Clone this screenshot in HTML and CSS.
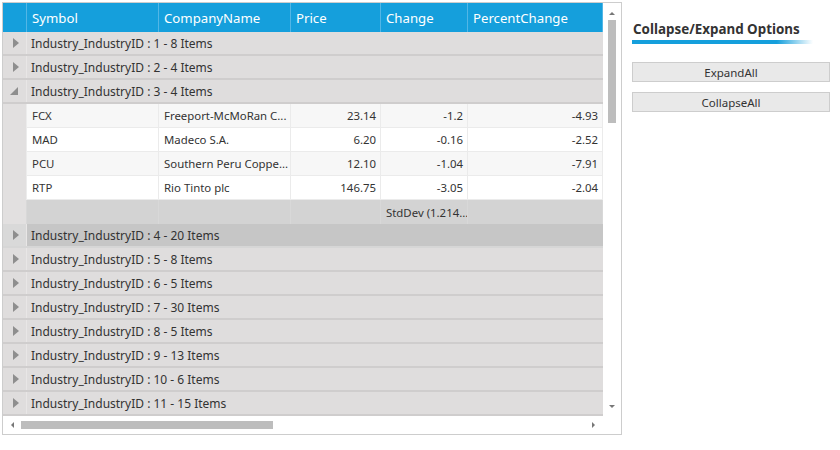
FILE: index.html
```html
<!DOCTYPE html>
<html>
<head>
<meta charset="utf-8">
<link rel="stylesheet" href="styles.css">
</head>
<body>
<div class="page">
  <div class="grid">
    <div class="viewport">
      <div class="header row">
        <div class="c ind hd"></div>
        <div class="c w1 hd">Symbol</div>
        <div class="c w2 hd">CompanyName</div>
        <div class="c w3 hd">Price</div>
        <div class="c w4 hd">Change</div>
        <div class="c w5 hd">PercentChange</div>
      </div>
      <div class="group"><div class="gind"><span class="tri-r"></span></div><div class="gtext">Industry_IndustryID : 1 - 8 Items</div></div>
      <div class="group"><div class="gind"><span class="tri-r"></span></div><div class="gtext">Industry_IndustryID : 2 - 4 Items</div></div>
      <div class="group"><div class="gind"><span class="tri-d"></span></div><div class="gtext">Industry_IndustryID : 3 - 4 Items</div></div>
      <div class="row data alt"><div class="c ind di"></div><div class="c w1">FCX</div><div class="c w2">Freeport-McMoRan C...</div><div class="c w3 r">23.14</div><div class="c w4 r">-1.2</div><div class="c w5 r">-4.93</div></div>
      <div class="row data"><div class="c ind di"></div><div class="c w1">MAD</div><div class="c w2">Madeco S.A.</div><div class="c w3 r">6.20</div><div class="c w4 r">-0.16</div><div class="c w5 r">-2.52</div></div>
      <div class="row data alt"><div class="c ind di"></div><div class="c w1">PCU</div><div class="c w2">Southern Peru Coppe...</div><div class="c w3 r">12.10</div><div class="c w4 r">-1.04</div><div class="c w5 r">-7.91</div></div>
      <div class="row data"><div class="c ind di"></div><div class="c w1">RTP</div><div class="c w2">Rio Tinto plc</div><div class="c w3 r">146.75</div><div class="c w4 r">-3.05</div><div class="c w5 r">-2.04</div></div>
      <div class="row summary"><div class="c ind si"></div><div class="c w1"></div><div class="c w2"></div><div class="c w3"></div><div class="c w4">StdDev (1.214...</div><div class="c w5"></div></div>
      <div class="group hot"><div class="gind"><span class="tri-r"></span></div><div class="gtext">Industry_IndustryID : 4 - 20 Items</div></div>
      <div class="group"><div class="gind"><span class="tri-r"></span></div><div class="gtext">Industry_IndustryID : 5 - 8 Items</div></div>
      <div class="group"><div class="gind"><span class="tri-r"></span></div><div class="gtext">Industry_IndustryID : 6 - 5 Items</div></div>
      <div class="group"><div class="gind"><span class="tri-r"></span></div><div class="gtext">Industry_IndustryID : 7 - 30 Items</div></div>
      <div class="group"><div class="gind"><span class="tri-r"></span></div><div class="gtext">Industry_IndustryID : 8 - 5 Items</div></div>
      <div class="group"><div class="gind"><span class="tri-r"></span></div><div class="gtext">Industry_IndustryID : 9 - 13 Items</div></div>
      <div class="group"><div class="gind"><span class="tri-r"></span></div><div class="gtext">Industry_IndustryID : 10 - 6 Items</div></div>
      <div class="group"><div class="gind"><span class="tri-r"></span></div><div class="gtext">Industry_IndustryID : 11 - 15 Items</div></div>
    </div>
    <div class="vscroll">
      <span class="arr-up"></span>
      <div class="vtrack"><div class="vthumb"></div></div>
      <span class="arr-down"></span>
    </div>
    <div class="hscroll">
      <span class="arr-left"></span>
      <div class="htrack"><div class="hthumb"></div></div>
      <span class="arr-right"></span>
    </div>
    <div class="corner"></div>
  </div>
  <div class="panel">
    <div class="title">Collapse/Expand Options</div>
    <div class="bar"></div>
    <button class="btn first">ExpandAll</button>
    <button class="btn">CollapseAll</button>
  </div>
</div>
</body>
</html>
```

FILE: styles.css
```css
* { box-sizing: border-box; }
html, body { margin: 0; padding: 0; background: #fff; }
body { font-family: "Segoe UI", "Noto Sans", "Open Sans", sans-serif; color: #333; }
.page { display: flex; align-items: flex-start; padding: 2px 0 0 2px; }
.grid {
  width: 620px; height: 433px;
  border: 1px solid #cdcdcd;
  display: grid;
  grid-template-columns: 600px 18px;
  grid-template-rows: 413px 18px;
  overflow: hidden;
}
.viewport { overflow: hidden; background: #fff; }
.row { display: flex; height: 24px; }
.c { flex: none; height: 100%; overflow: hidden; white-space: nowrap; display: flex; align-items: center; padding: 0 4px 0 5px; }
.ind { width: 24px; padding: 0; }
.w1 { width: 132px; }
.w2 { width: 132px; }
.w3 { width: 90px; }
.w4 { width: 87px; }
.w5 { width: 135px; }
.header { height: 29px; background: #159fdc; }
.hd { color: #fff; font-size: 13.2px; border-right: 1px solid #52b6e6; padding-top: 1px; }
.header .ind { border-right: 1px solid #52b6e6; }
.data { font-size: 11.4px; color: #333; background: #fff; }
.data.alt { background: #f7f7f7; }
.data .c { border-right: 1px solid #ebebeb; border-bottom: 1px solid #ebebeb; }
.data .di, .summary .si { background: #e2e0e0; border-right: 1px solid #ececec; border-bottom: none; }
.r { justify-content: flex-end; }
.summary { background: #d3d3d3; font-size: 11.4px; color: #333; }
.summary .c { border-right: 1px solid #d8d8d8; }
.group { display: flex; height: 24px; background: #dfdddd; border-bottom: 2px solid #cfcdcd; font-size: 12px; color: #333; }
.gind { width: 24px; flex: none; border-right: 1px solid #e8e6e6; display: flex; align-items: center; justify-content: center; }
.gtext { padding-left: 4px; display: flex; align-items: center; white-space: nowrap; padding-top: 1px; }
.group.hot { background: #c6c6c6; border-bottom-color: #d6d6d6; }
.group.hot .gind { background: #d9d9d9; }
.tri-r { width: 0; height: 0; border-top: 5px solid transparent; border-bottom: 5px solid transparent; border-left: 6px solid #8e8e8e; margin-left: 2px; }
.tri-d { width: 0; height: 0; border-left: 8px solid transparent; border-bottom: 8px solid #8e8e8e; margin-left: -2px; }
.vscroll { background: #fff; display: flex; flex-direction: column; align-items: center; }
.arr-up { margin-top: 9px; width: 0; height: 0; border-left: 3px solid transparent; border-right: 3px solid transparent; border-bottom: 3px solid #777; }
.vtrack { flex: 1; width: 100%; display: flex; justify-content: center; padding-top: 5px; }
.vthumb { width: 8px; height: 103px; background: #bdbdbd; }
.arr-down { margin-bottom: 8px; width: 0; height: 0; border-left: 3px solid transparent; border-right: 3px solid transparent; border-top: 3px solid #777; }
.hscroll { background: #fff; display: flex; align-items: center; padding: 0 8px; }
.arr-left { width: 0; height: 0; border-top: 3px solid transparent; border-bottom: 3px solid transparent; border-right: 3px solid #777; }
.htrack { flex: 1; display: flex; padding-left: 7px; }
.hthumb { width: 252px; height: 8px; background: #bdbdbd; }
.arr-right { width: 0; height: 0; border-top: 3px solid transparent; border-bottom: 3px solid transparent; border-left: 3px solid #777; }
.corner { background: #fff; }
.panel { margin-left: 10px; width: 200px; display: flex; flex-direction: column; padding-top: 18px; }
.title { font-size: 13.4px; font-weight: bold; color: #333; margin-left: 1px; line-height: 19px; }
.bar { height: 4px; width: 181px; margin-top: 1px; margin-left: 0; background: linear-gradient(to right, #159fdc 0%, #159fdc 80%, rgba(21,159,220,0) 100%); }
.btn { width: 198px; height: 20px; margin-top: 18px; background: #e9e9e9; border: 1px solid #cdcdcd; font-family: inherit; font-size: 11.5px; color: #333; padding: 0; }
.btn + .btn { margin-top: 10px; }
```
